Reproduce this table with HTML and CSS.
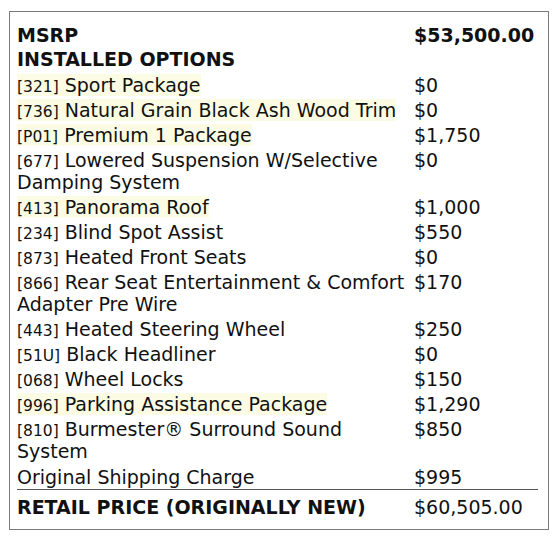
FILE: index.html
```html
<!DOCTYPE html>
<html>
<head>
<meta charset="utf-8">
<link rel="stylesheet" href="styles.css">
</head>
<body>
<div class="box">
<table class="sticker">
<colgroup><col class="c-desc"><col class="c-price"></colgroup>
<tbody>
<tr class="head"><td>MSRP</td><td>$53,500.00</td></tr>
<tr class="head"><td colspan="2">INSTALLED OPTIONS</td></tr>
<tr><td><span class="hl"><span class="code">[321]</span> Sport Package</span></td><td>$0</td></tr>
<tr><td><span class="hl"><span class="code">[736]</span> Natural Grain Black Ash Wood Trim</span></td><td>$0</td></tr>
<tr><td><span class="hl"><span class="code">[P01]</span> Premium 1 Package</span></td><td>$1,750</td></tr>
<tr><td><span class="code">[677]</span> Lowered Suspension W/Selective Damping System</td><td>$0</td></tr>
<tr><td><span class="hl"><span class="code">[413]</span> Panorama Roof</span></td><td>$1,000</td></tr>
<tr><td><span class="code">[234]</span> Blind Spot Assist</td><td>$550</td></tr>
<tr><td><span class="code">[873]</span> Heated Front Seats</td><td>$0</td></tr>
<tr><td><span class="code">[866]</span> Rear Seat Entertainment &amp; Comfort Adapter Pre Wire</td><td>$170</td></tr>
<tr><td><span class="code">[443]</span> Heated Steering Wheel</td><td>$250</td></tr>
<tr><td><span class="code">[51U]</span> Black Headliner</td><td>$0</td></tr>
<tr><td><span class="code">[068]</span> Wheel Locks</td><td>$150</td></tr>
<tr><td><span class="hl"><span class="code">[996]</span> Parking Assistance Package</span></td><td>$1,290</td></tr>
<tr><td><span class="code">[810]</span> Burmester® Surround Sound System</td><td>$850</td></tr>
<tr class="ship"><td>Original Shipping Charge</td><td>$995</td></tr>
<tr class="total"><td>RETAIL PRICE (ORIGINALLY NEW)</td><td>$60,505.00</td></tr>
</tbody>
</table>
</div>
</body>
</html>
```
FILE: styles.css
```css
html, body {
  margin: 0;
  padding: 0;
  background: #ffffff;
}
body {
  padding: 11px 8px 0 9px;
  font-family: "DejaVu Sans", sans-serif;
  color: #111111;
}
.box {
  width: 540px;
  height: 519px;
  box-sizing: border-box;
  border: 1px solid #7a7a7a;
  padding: 12px 0 0 7px;
}
.sticker {
  border-collapse: collapse;
  table-layout: fixed;
  width: 521px;
  font-size: 19px;
  line-height: 22px;
}
.c-desc { width: 397px; }
.c-price { width: 124px; }
.sticker td {
  padding: 2px 0 1px;
  vertical-align: top;
}
.sticker td:first-child {
  padding-right: 2px;
}
.head td {
  font-weight: bold;
  padding: 0 0 2px;
}
.code {
  font-size: 15.5px;
  line-height: 1;
}
.hl {
  background: #fcfce4;
}
.ship td {
  border-bottom: 1px solid #555555;
  padding: 3px 0 1px;
}
.total td {
  padding-top: 6px;
}
.total td:first-child {
  font-weight: bold;
}
```
